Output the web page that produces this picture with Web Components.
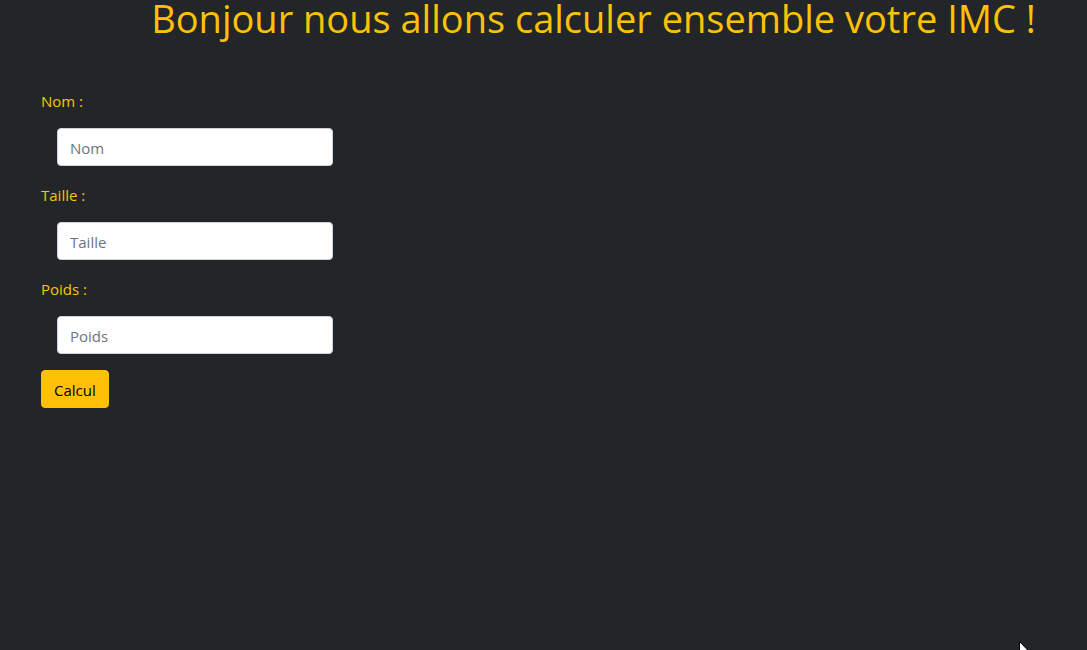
<!DOCTYPE html>
<html lang="fr">
<head>
<meta charset="utf-8">
<meta name="viewport" content="width=device-width, initial-scale=1">
<title>Calcul IMC</title>
<style>
  body {
    margin: 0;
    min-height: 100vh;
    background: #222628;
    color: #ffc107;
    font: 15px/24px "Open Sans", "Noto Sans", sans-serif;
  }
</style>
</head>
<body>
<imc-app></imc-app>
<script>
  class ImcTitle extends HTMLElement {
    constructor() {
      super();
      this.attachShadow({ mode: "open" }).innerHTML = `
        <style>
          :host { display: block; padding-left: 100px; }
          h1 { margin: 0; font-size: 38px; line-height: 36px; font-weight: 400; text-align: center; }
        </style>
        <h1><slot></slot></h1>`;
    }
  }

  class ImcField extends HTMLElement {
    constructor() {
      super();
      const name = this.getAttribute("name");
      this.attachShadow({ mode: "open" }).innerHTML = `
        <style>
          :host { display: flex; flex-direction: column; gap: 14px; }
          label { align-self: flex-start; line-height: 26px; }
          input {
            box-sizing: border-box;
            margin-left: 16px;
            padding: 7px 12px 5px;
            border: 1px solid #ced4da;
            border-radius: 4px;
            background: #fff;
            color: #212529;
            font: inherit;
            outline: none;
          }
          input::placeholder { color: #6c757d; opacity: 1; }
        </style>
        <label for="field">${name} :</label>
        <input id="field" type="text" placeholder="${name}">`;
    }
    get value() { return this.shadowRoot.querySelector("input").value; }
  }

  class ImcButton extends HTMLElement {
    constructor() {
      super();
      this.attachShadow({ mode: "open" }).innerHTML = `
        <style>
          :host { display: block; }
          button {
            padding: 7px 12px 5px;
            border: 1px solid #ffc107;
            border-radius: 4px;
            background: #ffc107;
            color: #000;
            font: inherit;
            cursor: pointer;
          }
        </style>
        <button type="button"><slot></slot></button>`;
    }
  }

  class ImcPointer extends HTMLElement {
    constructor() {
      super();
      this.attachShadow({ mode: "open" }).innerHTML = `
        <style>
          :host { display: block; position: fixed; right: 56px; bottom: 0; width: 12px; height: 9px; overflow: hidden; pointer-events: none; }
          svg { display: block; }
        </style>
        <svg width="12" height="19" viewBox="0 0 12 19" aria-hidden="true">
          <path d="M.5 .5V16.5L4.3 12.8L6.8 18.5L9 17.5L6.6 12H11.5Z" fill="#fff" stroke="#000"/>
        </svg>`;
    }
  }

  class ImcApp extends HTMLElement {
    constructor() {
      super();
      this.attachShadow({ mode: "open" }).innerHTML = `
        <style>
          :host { display: block; }
          form { display: flex; flex-direction: column; gap: 16px; max-width: 292px; margin: 0; padding: 52px 41px 24px; }
          imc-button { align-self: flex-start; }
        </style>
        <main>
          <imc-title>Bonjour nous allons calculer ensemble votre IMC !</imc-title>
          <form>
            <imc-field name="Nom"></imc-field>
            <imc-field name="Taille"></imc-field>
            <imc-field name="Poids"></imc-field>
            <imc-button>Calcul</imc-button>
          </form>
        </main>
        <imc-pointer></imc-pointer>`;
    }
  }

  customElements.define("imc-title", ImcTitle);
  customElements.define("imc-field", ImcField);
  customElements.define("imc-button", ImcButton);
  customElements.define("imc-pointer", ImcPointer);
  customElements.define("imc-app", ImcApp);
</script>
</body>
</html>
